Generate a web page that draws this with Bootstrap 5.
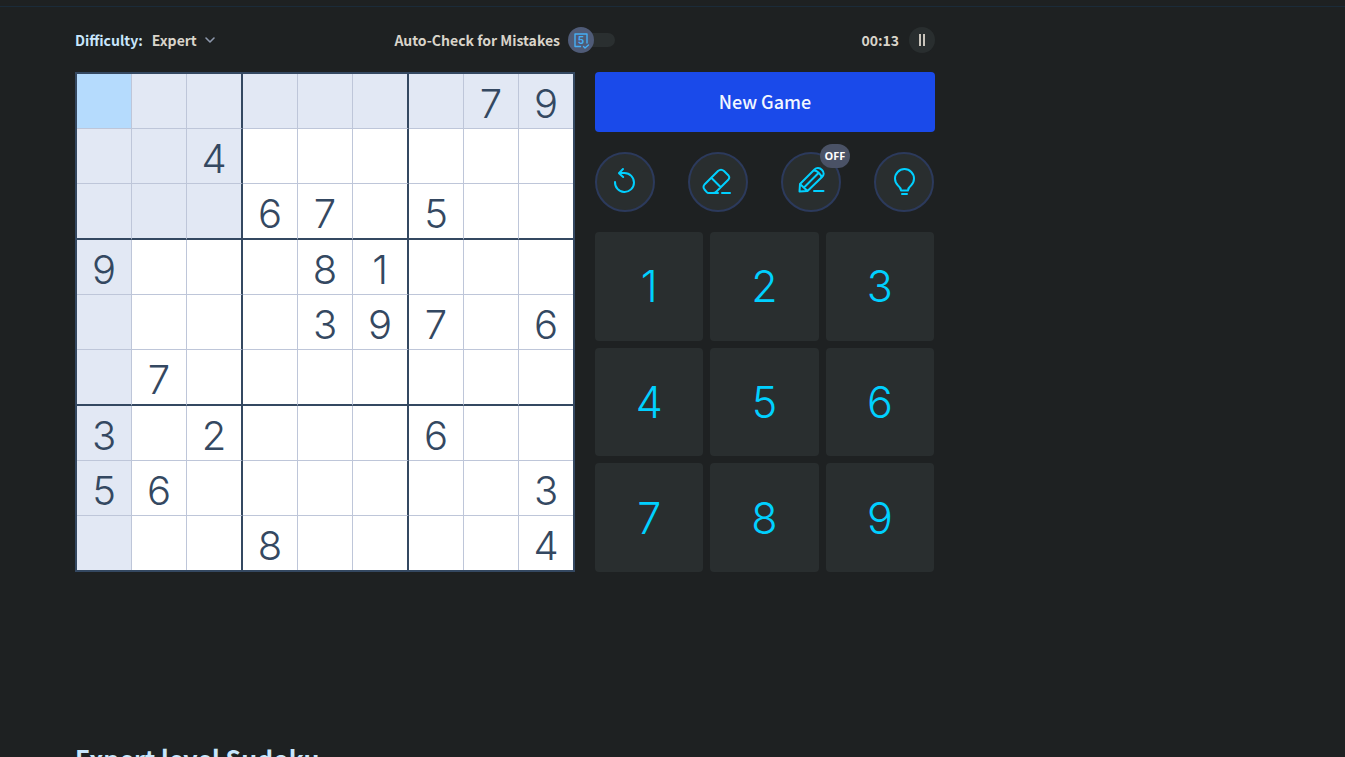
<!DOCTYPE html>
<html lang="en">
<head>
<meta charset="utf-8">
<meta name="viewport" content="width=device-width, initial-scale=1">
<title>Expert level Sudoku</title>
<link rel="stylesheet" href="https://cdn.jsdelivr.net/npm/bootstrap@5.3.0/dist/css/bootstrap.min.css">
<style>
  body { background: #1e2122; color: #d9d4ca; font-family: "Noto Sans CJK SC", "Open Sans", sans-serif; font-size: 14px; line-height: 20px; font-weight: 700; }
  .site-top { height: 7px; border-bottom: 1px solid #1b2b39; }
  .page-wrap { max-width: 1195px; }
  .game { max-width: 860px; }
  .game-bar { height: 65px; }
  .game-info { flex: 0 1 540px; }
  .game-main { gap: 20px; }
  .tag-label { color: #c8e6fc; }
  .level { padding: 0 19px 0 9px; border: 0; font: inherit; color: inherit; background-color: transparent; background-position: right 0 center; background-size: 12px 12px;
    background-image: url("data:image/svg+xml,%3Csvg xmlns='http://www.w3.org/2000/svg' viewBox='0 0 12 12'%3E%3Cpath d='M2 4l4 4 4-4' fill='none' stroke='%238d98ac' stroke-width='1.6' stroke-linecap='round' stroke-linejoin='round'/%3E%3C/svg%3E"); }
  .level option { color: #222; }
  .auto { width: 47px; height: 26px; }
  .auto input { appearance: none; width: 34px; height: 14px; border-radius: 7px; background: #2a2f30; }
  .auto svg { top: 0; left: 0; pointer-events: none; }
  .timer { gap: 10px; }
  .pause { width: 26px; height: 26px; background: #292e2f; }

  .board { flex: 0 0 500px; width: 500px; height: 500px; table-layout: fixed; border-collapse: separate; border-spacing: 0; border: 2px solid #344861; background: #fff; color: #344861; font-family: Inter, sans-serif; font-size: 40px; font-weight: 300; line-height: 48px; }
  .board .c { width: 55px; } .board .c-box { width: 56px; } .board .c-end { width: 54px; }
  .board td { height: 55px; padding: 6px 0 0; text-align: center; border: 0 solid #bec6d9; border-width: 0 1px 1px 0; }
  .board td:nth-child(3n) { border-right: 2px solid #344861; }
  .board tr:nth-child(3n) td { height: 56px; border-bottom: 2px solid #344861; }
  .board td:last-child { border-right: 0; }
  .board tr:last-child td { height: 54px; border-bottom: 0; }
  .board .near { background: #e2e8f4; }
  .board .picked { background: #b5dbfd; }

  .side { flex: 1 1 0; min-width: 0; gap: 20px; }
  .new-game { height: 60px; padding: 0 0 2px; border-radius: 4px; background: #1a4aea; color: #f3f7ff; font-size: 18px; font-weight: 500; }
  .new-game:hover { background: #1540d0; color: #fff; }
  .tools, .keys { padding-right: 1px; }
  .tool { width: 60px; height: 60px; border: 2px solid #2c3a5c; background: #292e2f; color: #00d0ff; }
  .tool svg { width: 32px; height: 32px; }
  .tool svg, .auto svg { fill: none; stroke: currentColor; stroke-linecap: round; stroke-linejoin: round; }
  .off { top: -10px; right: -11px; width: 30px; height: 24px; border-radius: 12px; background: #4a5266; color: #fff; font: 700 11px/24px "Open Sans", sans-serif; }
  .keys { display: grid; grid-template-columns: repeat(3, 1fr); gap: 7px; flex: 1; }
  .num { border: 0; border-radius: 4px; background: #292e2f; color: #00d0ff; font-family: Inter, sans-serif; font-size: 43px; font-weight: 300; line-height: 48px; }
  .below { margin-top: 170px; font-size: 25px; line-height: 32px; font-weight: 700; color: #c8e6fc; }
</style>
</head>
<body>
<header class="site-top"></header>
<main class="page-wrap mx-auto">
  <section class="game">
    <div class="game-bar d-flex align-items-center justify-content-between">
      <div class="game-info d-flex align-items-center justify-content-between">
        <div class="d-flex align-items-center">
          <label class="tag-label" for="level">Difficulty:</label>
          <select class="form-select level w-auto" id="level"><option>Expert</option></select>
        </div>
        <div class="d-flex align-items-center gap-2">
          <label for="auto">Auto-Check for Mistakes</label>
          <span class="auto position-relative d-flex align-items-center justify-content-end">
            <input type="checkbox" role="switch" id="auto">
            <svg class="position-absolute" width="26" height="26" viewBox="0 0 26 26" color="#46aef5" aria-hidden="true">
              <circle cx="13" cy="13" r="13" fill="#4f5b77" stroke="none"/>
              <path d="M12.500 19.500H7V7H19V16M15.500 19.500l1.500 1.500 3.500-3" stroke-width="1.400"/>
              <text x="13" y="17" text-anchor="middle" fill="#46aef5" stroke="none" font-family="Inter, sans-serif" font-size="10" font-weight="700">5</text>
            </svg>
          </span>
        </div>
      </div>
      <div class="timer d-flex align-items-center">
        <span>00:13</span>
        <button class="btn pause rounded-circle border-0 p-0 d-flex align-items-center justify-content-center" aria-label="Pause">
          <svg width="8" height="12" viewBox="0 0 8 12" fill="#c9c4bb"><path d="M1 0h2v12H1zM5 0h2v12H5z"/></svg>
        </button>
      </div>
    </div>
    <div class="game-main d-flex flex-wrap">
      <table class="board" aria-label="Sudoku">
        <colgroup><col class="c"><col class="c"><col class="c-box"><col class="c"><col class="c"><col class="c-box"><col class="c"><col class="c"><col class="c-end"></colgroup>
        <tbody>
          <tr><td class="picked"></td><td class="near"></td><td class="near"></td><td class="near"></td><td class="near"></td><td class="near"></td><td class="near"></td><td class="near">7</td><td class="near">9</td></tr>
          <tr><td class="near"></td><td class="near"></td><td class="near">4</td><td></td><td></td><td></td><td></td><td></td><td></td></tr>
          <tr><td class="near"></td><td class="near"></td><td class="near"></td><td>6</td><td>7</td><td></td><td>5</td><td></td><td></td></tr>
          <tr><td class="near">9</td><td></td><td></td><td></td><td>8</td><td>1</td><td></td><td></td><td></td></tr>
          <tr><td class="near"></td><td></td><td></td><td></td><td>3</td><td>9</td><td>7</td><td></td><td>6</td></tr>
          <tr><td class="near"></td><td>7</td><td></td><td></td><td></td><td></td><td></td><td></td><td></td></tr>
          <tr><td class="near">3</td><td></td><td>2</td><td></td><td></td><td></td><td>6</td><td></td><td></td></tr>
          <tr><td class="near">5</td><td>6</td><td></td><td></td><td></td><td></td><td></td><td></td><td>3</td></tr>
          <tr><td class="near"></td><td></td><td></td><td>8</td><td></td><td></td><td></td><td></td><td>4</td></tr>
        </tbody>
      </table>
      <div class="side d-flex flex-column">
        <button class="btn new-game w-100">New Game</button>
        <div class="tools d-flex justify-content-between">
          <button class="btn tool rounded-circle p-0 d-flex align-items-center justify-content-center" aria-label="Undo">
            <svg viewBox="0 0 32 32" stroke-width="2"><path d="M6 16A9.500 9.500 0 1 0 15.500 7H10M14 3L10 7.200L14.200 11"/></svg>
          </button>
          <button class="btn tool rounded-circle p-0 d-flex align-items-center justify-content-center" aria-label="Erase">
            <svg viewBox="0 0 32 32" stroke-width="2"><path d="M16 5L2.500 18.500Q.5 21 2.500 23.500L4.500 25.800Q5.500 27 7 27H11Q13 27 14.500 25.500L26.500 13.500Q28 11.500 26.500 9.500L22 5Q19 2.500 16 5zM9.500 12L18.500 21M11 27H16M20 27H28"/></svg>
          </button>
          <button class="btn tool position-relative rounded-circle p-0 d-flex align-items-center justify-content-center" aria-label="Notes off">
            <svg viewBox="0 0 32 32" stroke-width="2"><path d="M5 18L19.500 3.500C21.500 1.500 24.500 1.500 27 4C29.500 6.500 29 9 27 11L12.500 25L4.500 25.500zM5 18L12.500 25M9 21.500L23 7.500M19 4.500C22 4.500 26 8 26.500 11.500M19 25H28.500"/></svg>
            <span class="off position-absolute">OFF</span>
          </button>
          <button class="btn tool rounded-circle p-0 d-flex align-items-center justify-content-center" aria-label="Hint">
            <svg viewBox="0 0 32 32" stroke-width="2"><path d="M13 24.500Q13 22 10 19.500A9.500 9.500 0 1 1 23 19.500Q20 22 20 24.500zM14 28H19"/></svg>
          </button>
        </div>
        <div class="keys">
          <button class="btn num">1</button><button class="btn num">2</button><button class="btn num">3</button>
          <button class="btn num">4</button><button class="btn num">5</button><button class="btn num">6</button>
          <button class="btn num">7</button><button class="btn num">8</button><button class="btn num">9</button>
        </div>
      </div>
    </div>
  </section>
  <h1 class="below">Expert level Sudoku</h1>
</main>
<script src="https://cdn.jsdelivr.net/npm/bootstrap@5.3.0/dist/js/bootstrap.bundle.min.js"></script>
</body>
</html>
